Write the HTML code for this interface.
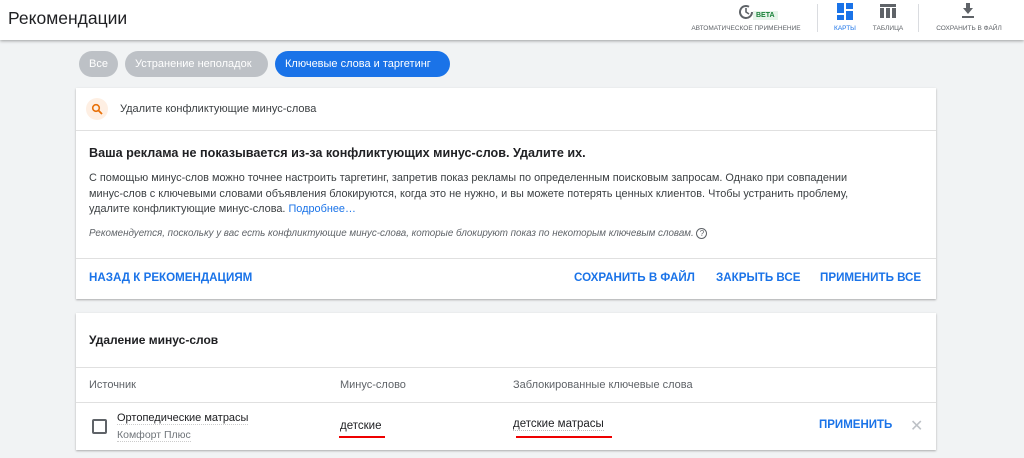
<!DOCTYPE html><html><head><meta charset="utf-8"><style>
*{box-sizing:border-box;margin:0;padding:0}
body{width:1024px;height:458px;overflow:hidden;background:#f1f3f4;font-family:"Liberation Sans",Arial,sans-serif;color:#202124;position:relative}
.hdr{position:absolute;left:0;top:0;width:1024px;height:40px;background:#fff;box-shadow:0 1px 3px rgba(0,0,0,.35)}
.ab{position:absolute;font-size:6.5px;color:#5f6368;text-align:center;white-space:nowrap}
.chip{position:absolute;top:51px;height:26px;border-radius:13px;font-size:11px;line-height:26px;color:#fff;padding:0 10px;white-space:nowrap}
.card{position:absolute;left:76px;width:860px;background:#fff;box-shadow:0 1px 2px rgba(0,0,0,.3)}
.a{position:absolute;font-size:12px;color:#1a73e8;font-weight:bold;white-space:nowrap}
.t{position:absolute;font-size:11.5px;color:#5f6368;white-space:nowrap}
</style></head><body>
<div class="hdr">
<div style="position:absolute;left:8px;top:8px;font-size:17.5px;color:#202124">Рекомендации</div>
<svg style="position:absolute;left:737px;top:3px" width="18" height="18" viewBox="0 0 18 18"><path d="M15 9A6 6 0 1 1 12 3.8" fill="none" stroke="#5f6368" stroke-width="2"/><path d="M9 5v4l3 2" fill="none" stroke="#5f6368" stroke-width="1.6"/></svg>
<div style="position:absolute;left:753px;top:11px;background:#e6f4ea;color:#188038;font-size:7px;font-weight:bold;padding:1px 3px">BETA</div>
<div class="ab" style="left:686px;top:25px;width:120px">АВТОМАТИЧЕСКОЕ ПРИМЕНЕНИЕ</div>
<div style="position:absolute;left:817px;top:4px;width:1px;height:28px;background:#dadce0"></div>
<div style="position:absolute;left:837px;top:3px;width:16px;height:16px">
<div style="position:absolute;left:0;top:0;width:7px;height:10px;background:#1a73e8"></div><div style="position:absolute;left:9px;top:0;width:7px;height:6px;background:#1a73e8"></div><div style="position:absolute;left:0;top:12px;width:7px;height:5px;background:#1a73e8"></div><div style="position:absolute;left:9px;top:8px;width:7px;height:9px;background:#1a73e8"></div></div>
<div class="ab" style="left:828px;top:25px;width:34px;color:#1a73e8">КАРТЫ</div>
<div style="position:absolute;left:880px;top:4px;width:16px;height:14px;background:#5f6368"></div>
<div style="position:absolute;left:884px;top:8px;width:2px;height:10px;background:#fff"></div><div style="position:absolute;left:890px;top:8px;width:2px;height:10px;background:#fff"></div><div style="position:absolute;left:880px;top:7px;width:16px;height:1px;background:#fff"></div>
<div class="ab" style="left:866px;top:25px;width:44px">ТАБЛИЦА</div>
<div style="position:absolute;left:918px;top:4px;width:1px;height:28px;background:#dadce0"></div>
<svg style="position:absolute;left:961px;top:3px" width="14" height="16" viewBox="0 0 14 16"><path d="M5 0h4v5h3l-5 6-5-6h3z" fill="#5f6368"/><rect x="1" y="13" width="12" height="2" fill="#5f6368"/></svg>
<div class="ab" style="left:926px;top:25px;width:86px">СОХРАНИТЬ В ФАЙЛ</div>
</div>
<div class="chip" style="left:79px;width:39px;background:#bdc1c6;line-height:27px">Все</div>
<div class="chip" style="left:125px;width:143px;background:#bdc1c6;line-height:27px">Устранение неполадок</div>
<div class="chip" style="left:275px;width:175px;background:#1a73e8;line-height:27px">Ключевые слова и таргетинг</div>
<div class="card" style="top:88px;height:211px">
<div style="position:absolute;left:10px;top:10px;width:22px;height:22px;border-radius:50%;background:#feefe3"></div>
<svg style="position:absolute;left:15px;top:15px" width="12" height="12" viewBox="0 0 12 12"><circle cx="5" cy="5" r="3.3" fill="none" stroke="#e8710a" stroke-width="1.6"/><path d="M7.5 7.5 11 11" stroke="#e8710a" stroke-width="1.8"/></svg>
<div class="t" style="left:44px;top:15px;color:#3c4043;font-size:11px">Удалите конфликтующие минус-слова</div>
<div style="position:absolute;left:0;top:42px;width:860px;height:1px;background:#e0e0e0"></div>
<div style="position:absolute;left:13px;top:58px;font-size:12.6px;font-weight:bold;color:#202124;white-space:nowrap">Ваша реклама не показывается из-за конфликтующих минус-слов. Удалите их.</div>
<div style="position:absolute;left:13px;top:83px;width:860px;font-size:10.9px;line-height:15.5px;color:#3c4043;white-space:nowrap">С помощью минус-слов можно точнее настроить таргетинг, запретив показ рекламы по определенным поисковым запросам. Однако при совпадении<br>минус-слов с ключевыми словами объявления блокируются, когда это не нужно, и вы можете потерять ценных клиентов. Чтобы устранить проблему,<br>удалите конфликтующие минус-слова. <span style="color:#1a73e8">Подробнее…</span></div>
<div style="position:absolute;left:13px;top:140px;font-size:9.8px;font-style:italic;color:#5f6368;white-space:nowrap">Рекомендуется, поскольку у вас есть конфликтующие минус-слова, которые блокируют показ по некоторым ключевым словам. <span style="font-style:normal;border:1px solid #5f6368;border-radius:50%;display:inline-block;width:11px;height:11px;font-size:8px;text-align:center;line-height:10px">?</span></div>
<div style="position:absolute;left:0;top:170px;width:860px;height:1px;background:#e0e0e0"></div>
<div class="a" style="left:13px;top:183px;font-size:11.6px">НАЗАД К РЕКОМЕНДАЦИЯМ</div>
<div class="a" style="left:498px;top:183px;font-size:11.6px">СОХРАНИТЬ В ФАЙЛ</div>
<div class="a" style="left:640px;top:183px;font-size:11.6px">ЗАКРЫТЬ ВСЕ</div>
<div class="a" style="left:744px;top:183px;font-size:11.6px">ПРИМЕНИТЬ ВСЕ</div>
</div>
<div class="card" style="top:313px;height:137px">
<div style="position:absolute;left:13px;top:20px;font-size:12px;font-weight:bold;color:#202124">Удаление минус-слов</div>
<div style="position:absolute;left:0;top:54px;width:860px;height:1px;background:#e0e0e0"></div>
<div class="t" style="left:13px;top:66px;font-size:11px">Источник</div>
<div class="t" style="left:264px;top:66px;font-size:11px">Минус-слово</div>
<div class="t" style="left:437px;top:66px;font-size:11px">Заблокированные ключевые слова</div>
<div style="position:absolute;left:0;top:89px;width:860px;height:1px;background:#e0e0e0"></div>
<div style="position:absolute;left:16px;top:106px;width:15px;height:15px;border:2px solid #5f6368;border-radius:2px"></div>
<div style="position:absolute;left:41px;top:99px;font-size:11px;color:#202124;border-bottom:1px dotted #ccc;white-space:nowrap">Ортопедические матрасы</div>
<div style="position:absolute;left:41px;top:116px;font-size:10.5px;color:#70757a;border-bottom:1px dotted #ccc;white-space:nowrap">Комфорт Плюс</div>
<div style="position:absolute;left:264px;top:107px;font-size:11.5px;color:#202124">детские</div>
<div style="position:absolute;left:263px;top:123px;width:46px;height:2px;background:#e00"></div>
<div style="position:absolute;left:437px;top:105px;font-size:11.5px;color:#202124;border-bottom:1px dotted #bbb;white-space:nowrap">детские матрасы</div>
<div style="position:absolute;left:440px;top:123px;width:96px;height:2px;background:#e00"></div>
<div class="a" style="left:743px;top:106px;font-size:11.5px">ПРИМЕНИТЬ</div>
<div style="position:absolute;left:834px;top:103px;font-size:16px;color:#bdc1c6">✕</div>
</div>
</body></html>
